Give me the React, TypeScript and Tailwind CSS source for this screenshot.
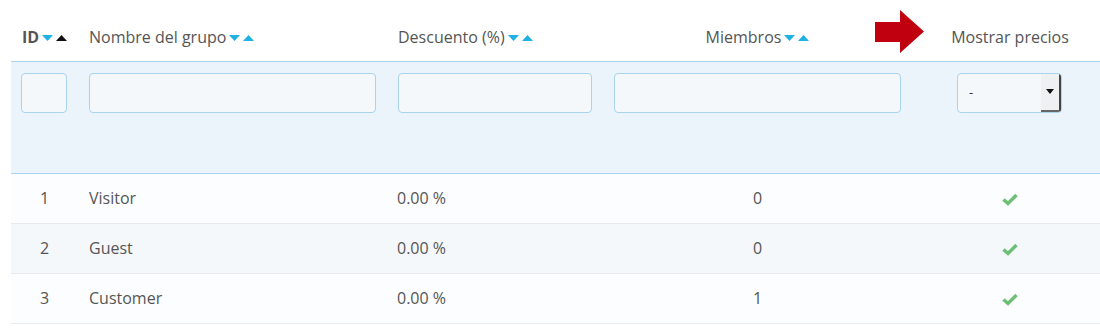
import React from "react";

const rows = [
  { id: 1, name: "Visitor", discount: "0.00 %", members: 0 },
  { id: 2, name: "Guest", discount: "0.00 %", members: 0 },
  { id: 3, name: "Customer", discount: "0.00 %", members: 1 },
];

function SortArrows({ activeUp = false }: { activeUp?: boolean }) {
  return (
    <span className="ml-[3px] inline-flex items-center gap-[3px] align-middle">
      <svg width="11" height="6" viewBox="0 0 11 6">
        <path d="M0 0 L11 0 L5.5 6 Z" fill="#1fb0e6" />
      </svg>
      <svg width="11" height="6" viewBox="0 0 11 6">
        <path d="M0 6 L11 6 L5.5 0 Z" fill={activeUp ? "#111111" : "#1fb0e6"} />
      </svg>
    </span>
  );
}

function Check() {
  return (
    <svg width="16" height="13" viewBox="0 0 16 13" className="inline-block">
      <path d="M1.5 6.5 L6 10.5 L14.5 2" fill="none" stroke="#6cbf73" strokeWidth="3.4" strokeLinejoin="miter" />
    </svg>
  );
}

function FilterInput({ width }: { width: string }) {
  return (
    <input
      type="text"
      className={`${width} h-[40px] rounded-[4px] border border-[#a8d4ee] bg-[#f5f8fa] outline-none`}
    />
  );
}

export default function App() {
  return (
    <div
      className="h-[328px] w-[1100px] overflow-hidden bg-white pl-[11px] text-[16px] text-[#555555]"
      style={{ fontFamily: '"Open Sans", "Liberation Sans", sans-serif' }}
    >
      <table className="w-[1089px] table-fixed border-collapse">
        <colgroup>
          <col className="w-[67px]" />
          <col className="w-[309px]" />
          <col className="w-[216px]" />
          <col className="w-[309px]" />
          <col className="w-[188px]" />
        </colgroup>
        <thead>
          <tr className="h-[61px] border-b border-[#a8d4ee]">
            <th className="pb-[12px] pl-[11px] text-left align-bottom font-bold">
              ID<SortArrows activeUp />
            </th>
            <th className="pb-[12px] pl-[11px] text-left align-bottom font-normal">
              Nombre del grupo<SortArrows />
            </th>
            <th className="pb-[12px] pl-[11px] text-left align-bottom font-normal">
              Descuento (%)<SortArrows />
            </th>
            <th className="pb-[12px] text-center align-bottom font-normal">
              Miembros<SortArrows />
            </th>
            <th className="relative pb-[12px] pl-[8px] text-center align-bottom font-normal">
              {/* red arrow pointing at the column */}
              <svg width="50" height="43" viewBox="0 0 50 43" className="absolute left-[-37px] top-[10px]">
                <path d="M0 12 L25 12 L25 0 L49 21.5 L25 43 L25 32 L0 32 Z" fill="#c1000f" />
              </svg>
              Mostrar precios
            </th>
          </tr>
          <tr className="h-[112px] border-b border-[#a8d4ee] bg-[#ebf4fb]">
            <td className="pl-[10px] pt-[11px] align-top">
              <FilterInput width="w-[46px]" />
            </td>
            <td className="pl-[11px] pt-[11px] align-top">
              <FilterInput width="w-[287px]" />
            </td>
            <td className="pl-[11px] pt-[11px] align-top">
              <FilterInput width="w-[194px]" />
            </td>
            <td className="pl-[11px] pt-[11px] align-top">
              <FilterInput width="w-[287px]" />
            </td>
            <td className="pl-[45px] pt-[11px] align-top">
              <div className="flex h-[40px] w-[105px] overflow-hidden rounded-[4px] border border-[#a8d4ee] bg-[#f5f8fa]">
                <span className="flex flex-1 items-center pl-[11px] text-[13px] text-[#333]">-</span>
                <span className="flex w-[20px] items-center justify-center border-r-2 border-b-2 border-r-[#444] border-b-[#666] bg-[#eef0f1]">
                  <svg width="8" height="5" viewBox="0 0 8 5">
                    <path d="M0 0 L8 0 L4 5 Z" fill="#111" />
                  </svg>
                </span>
              </div>
            </td>
          </tr>
        </thead>
        <tbody>
          {rows.map((r, i) => (
            <tr
              key={r.id}
              className={`h-[50px] border-b border-[#e6eaed] ${i === 1 ? "bg-[#f5f8fa]" : "bg-[#fcfdfe]"}`}
            >
              <td className="text-center">{r.id}</td>
              <td className="pl-[11px]">{r.name}</td>
              <td className="pl-[10px]">{r.discount}</td>
              <td className="text-center">{r.members}</td>
              <td className="pl-[8px] text-center">
                <Check />
              </td>
            </tr>
          ))}
        </tbody>
      </table>
    </div>
  );
}
